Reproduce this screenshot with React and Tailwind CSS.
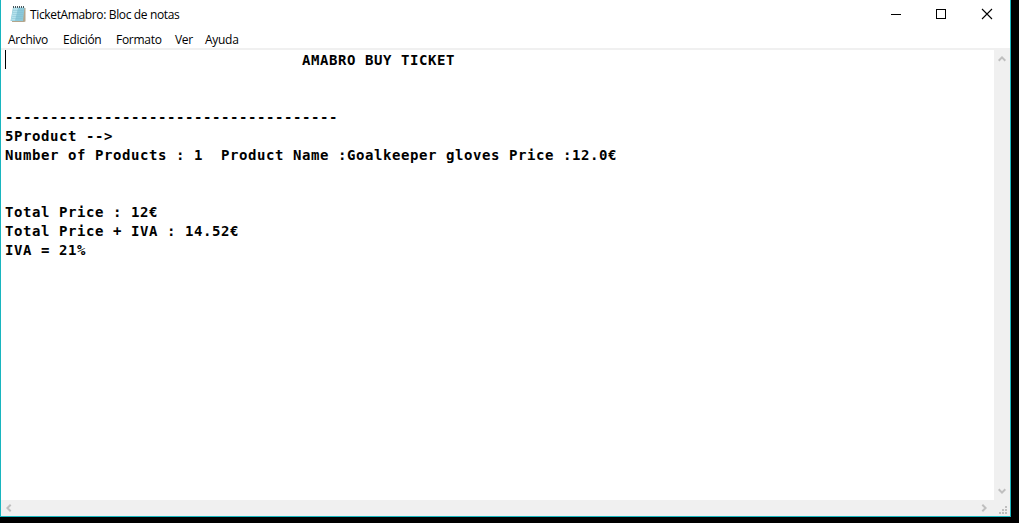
const receipt = [
  ' '.repeat(33) + 'AMABRO BUY TICKET',
  '',
  '',
  '-'.repeat(37),
  '5Product -->',
  'Number of Products : 1  Product Name :Goalkeeper gloves Price :12.0€',
  '',
  '',
  'Total Price : 12€',
  'Total Price + IVA : 14.52€',
  'IVA = 21%',
].join('\n');

function NotepadIcon() {
  return (
    <svg width="16" height="17" viewBox="0 0 16 17" className="shrink-0">
      <path d="M3 2H15.5V15.5L14 16H2Z" fill="#b3a58c" />
      <path d="M3 1.5H14.5L13 15H.5Z" fill="#8cc9da" />
      <path d="M3.5 2H8L5 14.5H1Z" fill="#b5e2ec" />
      <path d="M3 4.5H13.5M2.8 6.5H13.3M2.5 8.5H13M2.2 10.5H12.8M2 12.5H12.5" stroke="#7dbbd0" strokeWidth=".4" />
      <path d="M3 1H15" stroke="#45565c" strokeWidth="2" strokeDasharray="1 1" />
    </svg>
  );
}

function Chevron({ className }) {
  return (
    <svg width="8" height="6" viewBox="0 0 8 6" className={className}>
      <path d="M.7 4.7L4 1.4L7.3 4.7" fill="none" stroke="#bfbfbf" strokeWidth="2" />
    </svg>
  );
}

function TitleBar() {
  return (
    <header className="flex h-[29px] shrink-0 items-center pl-[9px] text-[12px] tracking-[-0.36px]">
      <NotepadIcon />
      <span className="ml-[4px] w-[152px] pt-px whitespace-nowrap">TicketAmabro: Bloc de notas</span>
      <svg width="102" height="13" viewBox="0 0 102 13" className="ml-auto mr-[17px]" fill="none" stroke="#000">
        <path d="M0 6.5H10" shapeRendering="crispEdges" />
        <path d="M45.5 1.5H54.5V10.5H45.5Z" shapeRendering="crispEdges" />
        <path d="M91 1L101 11M101 1L91 11" strokeWidth="1.1" />
      </svg>
    </header>
  );
}

function MenuBar() {
  return (
    <nav className="flex h-[19px] shrink-0 items-center pt-[3px] pl-[7px] text-[12px] tracking-[-0.28px]">
      <span className="w-[55px]">Archivo</span>
      <span className="w-[53px]">Edición</span>
      <span className="w-[59px]">Formato</span>
      <span className="w-[30px]">Ver</span>
      <span>Ayuda</span>
    </nav>
  );
}

export default function App() {
  return (
    <div className="h-[523px] w-[1019px] overflow-hidden bg-black pr-2 pb-1.5 text-black">
      <div className="flex h-[517px] flex-col border-x border-b border-[#18b5bf] bg-white font-['Open_Sans','Noto_Sans',sans-serif]">
        <TitleBar />
        <MenuBar />
        <div className="flex min-h-0 flex-1 border-t-2 border-[#f0f0f0]">
          <main className="flex min-w-0 flex-1 pl-1">
            <span className="h-[19px] w-px bg-black" />
            <pre className="-ml-px pt-px font-['DejaVu_Sans_Mono',monospace] text-[14px] leading-[19px] font-bold tracking-[0.572px]">{receipt}</pre>
          </main>
          <aside className="flex w-4 flex-col items-center justify-between bg-[#f0f0f0] pt-1.5 pb-1.5">
            <Chevron />
            <Chevron className="rotate-180" />
          </aside>
        </div>
        <footer className="flex h-4 shrink-0 items-center bg-[#f0f0f0] pl-1">
          <Chevron className="-rotate-90" />
          <Chevron className="ml-auto rotate-90" />
          <svg width="8" height="8" viewBox="0 0 8 8" className="ml-[11px] mr-[3px] mt-1" fill="#bfbfbf">
            <path d="M6 0h2v2H6zM3 3h2v2H3zM6 3h2v2H6zM0 6h2v2H0zM3 6h2v2H3zM6 6h2v2H6z" />
          </svg>
        </footer>
      </div>
    </div>
  );
}
